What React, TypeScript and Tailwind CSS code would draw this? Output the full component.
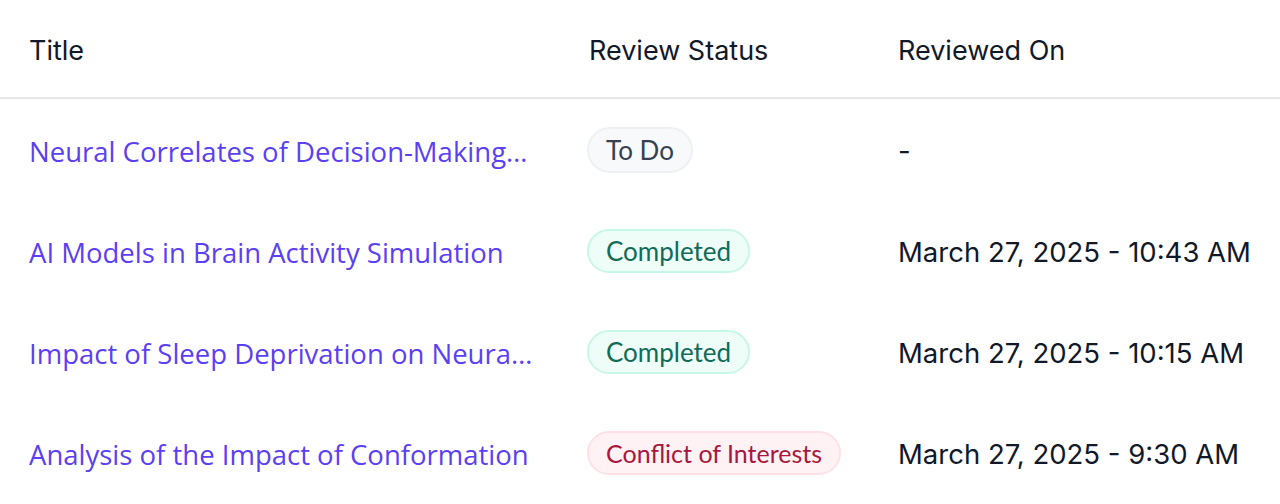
import React from "react";

type Status = "todo" | "completed" | "conflict";

const rows: { title: string; status: Status; reviewedOn: string }[] = [
  { title: "Neural Correlates of Decision-Making…", status: "todo", reviewedOn: "-" },
  { title: "AI Models in Brain Activity Simulation", status: "completed", reviewedOn: "March 27, 2025 - 10:43 AM" },
  { title: "Impact of Sleep Deprivation on Neura…", status: "completed", reviewedOn: "March 27, 2025 - 10:15 AM" },
  { title: "Analysis of the Impact of Conformation", status: "conflict", reviewedOn: "March 27, 2025 - 9:30 AM" },
];

function StatusBadge({ status }: { status: Status }) {
  if (status === "completed") {
    return (
      <span className="inline-flex h-[44px] items-center rounded-full border-2 border-[#c9f7e7] bg-[#effdf8] px-[17px] pt-[2px] text-[#106b58]">
        Completed
      </span>
    );
  }
  if (status === "conflict") {
    return (
      <span className="inline-flex h-[44px] items-center rounded-full border-2 border-[#fde1e6] bg-[#fff2f4] px-[17px] pt-[2px] text-[25px] text-[#a8173d]">
        Conflict of Interests
      </span>
    );
  }
  return (
    <span className="inline-flex h-[46px] items-center rounded-full border-2 border-[#eef0f3] bg-[#f8f9fb] px-[17px] pt-[2px] text-[#374151]">
      To Do
    </span>
  );
}

export default function App() {
  return (
    <div className="min-h-[504px] bg-white text-[26px] text-[#111827] font-['Lato','Noto_Sans',sans-serif]">
      <div className="grid h-[99px] grid-cols-[560px_309px_1fr] items-center border-b-2 border-[#e5e7eb] pl-[29px] pt-[5px] text-[27px] font-['Inter',sans-serif]">
        <div>Title</div>
        <div>Review Status</div>
        <div>Reviewed On</div>
      </div>
      {rows.map((r) => (
        <div key={r.title} className="grid h-[101px] grid-cols-[560px_309px_1fr] items-center pl-[29px]">
          <div className="w-[520px] truncate pt-[4px] text-[27.5px] text-[#5b3ff3] font-['Open_Sans',sans-serif]">{r.title}</div>
          <div className="-ml-[2px]">
            <StatusBadge status={r.status} />
          </div>
          <div className="pt-[4px] text-[27.5px] font-['Inter',sans-serif]">{r.reviewedOn}</div>
        </div>
      ))}
    </div>
  );
}
